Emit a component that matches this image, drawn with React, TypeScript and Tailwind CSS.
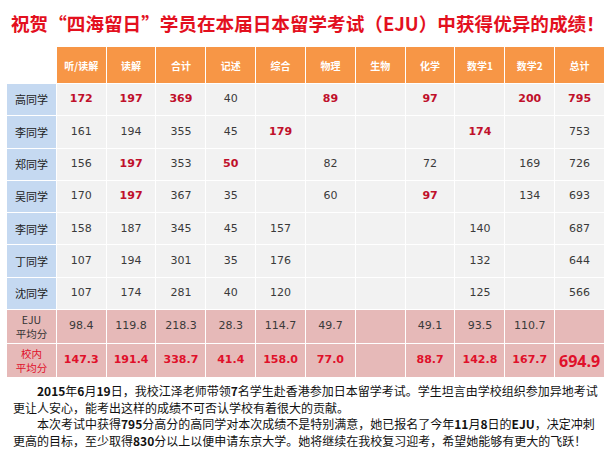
const headers = ["听/读解", "读解", "合计", "记述", "综合", "物理", "生物", "化学", "数学1", "数学2", "总计"];

// "*" prefix marks a highlighted (red, bold) score
const students: [string, string[]][] = [
  ["高同学", ["*172", "*197", "*369", "40", "", "*89", "", "*97", "", "*200", "*795"]],
  ["李同学", ["161", "194", "355", "45", "*179", "", "", "", "*174", "", "753"]],
  ["郑同学", ["156", "*197", "353", "*50", "", "82", "", "72", "", "169", "726"]],
  ["吴同学", ["170", "*197", "367", "35", "", "60", "", "*97", "", "134", "693"]],
  ["李同学", ["158", "187", "345", "45", "157", "", "", "", "140", "", "687"]],
  ["丁同学", ["107", "194", "301", "35", "176", "", "", "", "132", "", "644"]],
  ["沈同学", ["107", "174", "281", "40", "120", "", "", "", "125", "", "566"]],
];

const ejuAvg = ["98.4", "119.8", "218.3", "28.3", "114.7", "49.7", "", "49.1", "93.5", "110.7", ""];
const schoolAvg = ["147.3", "191.4", "338.7", "41.4", "158.0", "77.0", "", "88.7", "142.8", "167.7"];

const cjk = "font-['Noto_Sans_CJK_SC','Noto_Sans',sans-serif]";
const num = "font-['DejaVu_Sans','Noto_Sans_CJK_SC',sans-serif]";

const App = () => {
  return (
    <div className={`w-[611px] h-[458px] overflow-hidden bg-white ${cjk}`}>
      {/* Title */}
      <h1 className="pl-[11px] pt-[9px] h-[47px] text-[18.6px] leading-[28px] font-bold text-[#e3101e] whitespace-nowrap">
        祝贺“四海留日”学员在本届日本留学考试（EJU）中获得优异的成绩！
      </h1>

      {/* Score table */}
      <div className="ml-[7px] w-[597px] grid grid-cols-[repeat(12,1fr)] grid-rows-[36px_repeat(7,31.3px)_33px_33px] gap-px bg-white">
        <div className="bg-white" />
        {headers.map((h) => (
          <div
            key={h}
            className="bg-[#f79646] flex items-center justify-center text-white text-[10px] font-bold"
          >
            {h}
          </div>
        ))}

        {students.map(([name, scores], i) => (
          <div key={i} className="contents">
            <div className="bg-[#c5d9f1] flex items-center justify-center text-[11px] text-[#222]">
              {name}
            </div>
            {scores.map((s, j) => {
              const hi = s.startsWith("*");
              return (
                <div
                  key={j}
                  className={`bg-[#f2f2f2] flex items-center justify-center text-[11px] ${num} ${
                    hi ? "text-[#c0102b] font-bold" : "text-[#3a3a3a]"
                  }`}
                >
                  {hi ? s.slice(1) : s}
                </div>
              );
            })}
          </div>
        ))}

        {/* EJU average */}
        <div className="bg-[#e6b9b8] flex flex-col items-center justify-center text-[10.5px] leading-[14px] text-[#333]">
          <span>EJU</span>
          <span>平均分</span>
        </div>
        {ejuAvg.map((s, j) => (
          <div
            key={j}
            className={`bg-[#e6b9b8] flex items-center justify-center text-[11px] text-[#3a3a3a] ${num}`}
          >
            {s}
          </div>
        ))}

        {/* School average */}
        <div className="bg-[#e6b9b8] flex flex-col items-center justify-center text-[10.5px] leading-[14px] text-[#e0102a]">
          <span>校内</span>
          <span>平均分</span>
        </div>
        {schoolAvg.map((s, j) => (
          <div
            key={j}
            className={`bg-[#e6b9b8] flex items-center justify-center text-[11px] font-bold text-[#e0102a] ${num}`}
          >
            {s}
          </div>
        ))}
        <div className="bg-[#e6b9b8] flex items-center justify-center text-[16px] font-bold text-[#e0102a] font-['Open_Sans','Noto_Sans',sans-serif]">
          694.9
        </div>
      </div>

      {/* Report text */}
      <div className="mt-[6px] pl-[13px] text-[12px] leading-[16.5px] text-[#111] whitespace-nowrap">
        <p className="indent-[24px]">
          <b>2015</b>年<b>6</b>月<b>19</b>日，我校江泽老师带领<b>7</b>名学生赴香港参加日本留学考试。学生坦言由学校组织参加异地考试
        </p>
        <p>更让人安心，能考出这样的成绩不可否认学校有着很大的贡献。</p>
        <p className="indent-[24px]">
          本次考试中获得<b>795</b>分高分的高同学对本次成绩不是特别满意，她已报名了今年<b>11</b>月<b>8</b>日的<b>EJU</b>，决定冲刺
        </p>
        <p>更高的目标，至少取得<b>830</b>分以上以便申请东京大学。她将继续在我校复习迎考，希望她能够有更大的飞跃！</p>
      </div>
    </div>
  );
};

export default App;
